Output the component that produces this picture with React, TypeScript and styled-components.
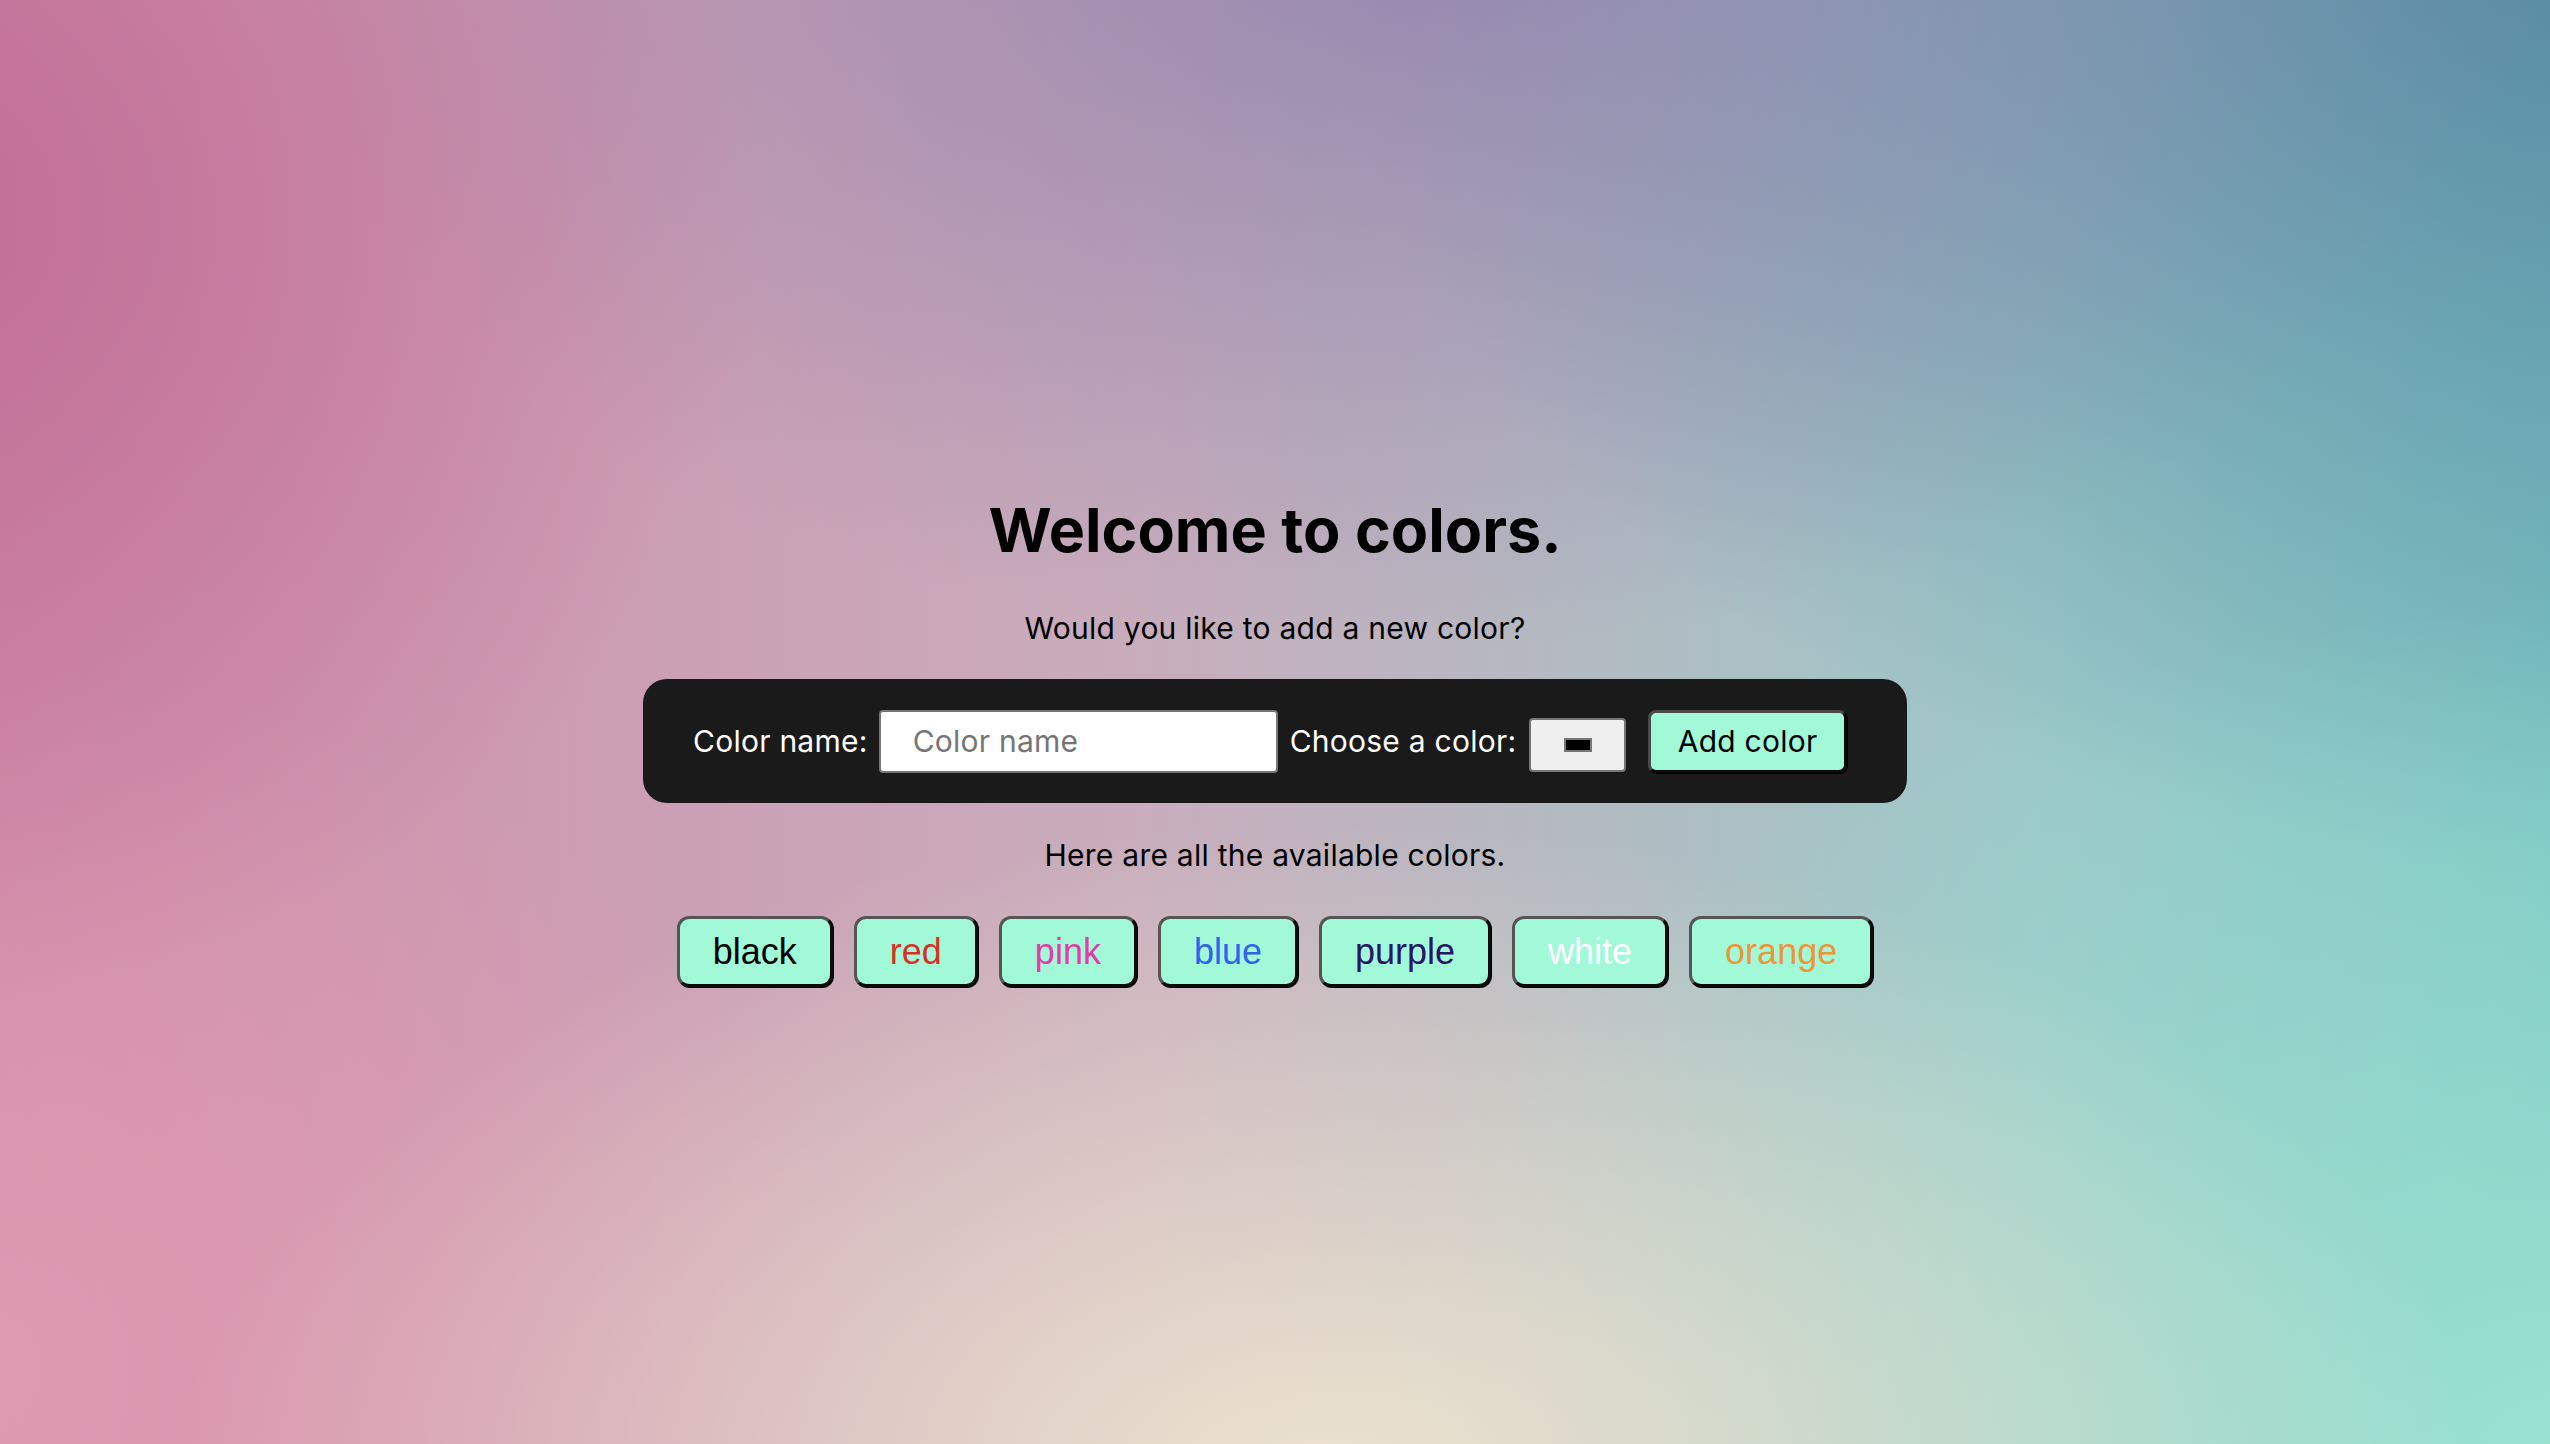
import React from "react";
import styled, { createGlobalStyle } from "styled-components";

const GlobalStyle = createGlobalStyle`
  html, body, #root {
    margin: 0;
    padding: 0;
    height: 100%;
  }
  body {
    font-family: Inter, "Noto Sans", "Liberation Sans", sans-serif;
    color: #000;
    background: #c9a6b8;
  }
  * { box-sizing: border-box; }
`;

const Page = styled.main`
  min-height: 100vh;
  display: flex;
  flex-direction: column;
  align-items: center;
  justify-content: center;
  padding-top: 37px;
  background:
    radial-gradient(ellipse 45% 45% at 52% 102%, rgba(236, 226, 206, 1) 0%, rgba(236, 226, 206, 0) 100%),
    radial-gradient(ellipse 50% 60% at 102% 102%, rgba(155, 226, 208, 1) 0%, rgba(155, 226, 208, 0) 100%),
    radial-gradient(ellipse 45% 50% at 55% -5%, rgba(145, 128, 172, 0.85) 0%, rgba(145, 128, 172, 0) 100%),
    radial-gradient(ellipse 50% 65% at 102% -5%, rgba(88, 136, 162, 1) 0%, rgba(88, 136, 162, 0) 100%),
    radial-gradient(ellipse 35% 55% at -5% 15%, rgba(192, 108, 150, 1) 0%, rgba(192, 108, 150, 0) 100%),
    radial-gradient(ellipse 40% 50% at -5% 95%, rgba(224, 156, 178, 1) 0%, rgba(224, 156, 178, 0) 100%),
    linear-gradient(90deg, #d08ca8 0%, #c8adbc 45%, #9cc8c8 80%, #7cc6c4 100%);
`;

const Title = styled.h1`
  margin: 0;
  font-size: 61px;
  line-height: 72px;
  font-weight: 700;
  letter-spacing: 0;
`;

const Lead = styled.p<{ $top: number }>`
  margin: ${(p) => p.$top}px 0 0;
  font-size: 30px;
  line-height: 36px;
  font-weight: 400;
  letter-spacing: 0.25px;
`;

const Panel = styled.form`
  margin-top: 33px;
  width: 1264px;
  height: 124px;
  display: flex;
  align-items: center;
  padding: 0 60px 0 50px;
  border-radius: 24px;
  background: #1b1a1b;
  color: #fff;
`;

const Label = styled.label<{ $gap: number }>`
  font-size: 30px;
  line-height: 36px;
  letter-spacing: 0.25px;
  white-space: nowrap;
  margin-right: ${(p) => p.$gap}px;
`;

const TextField = styled.input`
  width: 399px;
  height: 63px;
  margin-right: 12px;
  padding: 0 32px;
  border: 2px solid #767676;
  border-radius: 4px;
  background: #fff;
  font-family: Inter, "Noto Sans", sans-serif;
  font-size: 30px;
  letter-spacing: 0.25px;
  color: #000;
  outline: none;
  &::placeholder {
    color: #757575;
  }
`;

const ColorWell = styled.span`
  width: 98px;
  height: 54px;
  margin-top: 8px;
  margin-right: 22px;
  display: flex;
  align-items: center;
  justify-content: center;
  background: #efefef;
  border: 2px solid #767676;
  border-radius: 4px;
`;

const Swatch = styled.span`
  width: 28px;
  height: 14px;
  background: #000;
  border: 2px solid #767676;
`;

const AddButton = styled.button`
  width: 201px;
  height: 63px;
  padding: 0;
  border: 3px solid;
  border-color: #4a4a4a #0a0a0a #0a0a0a #4a4a4a;
  border-radius: 8px;
  box-shadow: 1px 1px 0 #000;
  background: #a1f9d7;
  font-family: Inter, "Noto Sans", sans-serif;
  font-size: 30px;
  letter-spacing: 0.25px;
  color: #000;
`;

const ListRow = styled.div`
  margin-top: 43px;
  display: flex;
  gap: 21px;
`;

const ColorButton = styled.button<{ $color: string }>`
  height: 71px;
  padding: 0 33px;
  border: 3px solid;
  border-color: #555 #0b0b0b #0b0b0b #555;
  border-radius: 12px;
  box-shadow: 1px 1px 0 #000;
  background: #a1f9d7;
  font-family: "Liberation Sans", Arial, sans-serif;
  font-size: 36px;
  line-height: 41px;
  color: ${(p) => p.$color};
`;

const colors = [
  { name: "black", color: "#000000" },
  { name: "red", color: "#dc2f24" },
  { name: "pink", color: "#e23ca8" },
  { name: "blue", color: "#2f63ee" },
  { name: "purple", color: "#2b1467" },
  { name: "white", color: "#ffffff" },
  { name: "orange", color: "#ea963a" },
];

export default function App() {
  return (
    <>
      <GlobalStyle />
      <Page>
        <Title>Welcome to colors.</Title>
        <Lead $top={44}>Would you like to add a new color?</Lead>
        <Panel onSubmit={(e) => e.preventDefault()}>
          <Label $gap={11} htmlFor="cname">Color name:</Label>
          <TextField id="cname" placeholder="Color name" />
          <Label $gap={13}>Choose a color:</Label>
          <ColorWell>
            <Swatch />
          </ColorWell>
          <AddButton type="submit">Add color</AddButton>
        </Panel>
        <Lead $top={34}>Here are all the available colors.</Lead>
        <ListRow>
          {colors.map((c) => (
            <ColorButton key={c.name} $color={c.color}>
              {c.name}
            </ColorButton>
          ))}
        </ListRow>
      </Page>
    </>
  );
}
